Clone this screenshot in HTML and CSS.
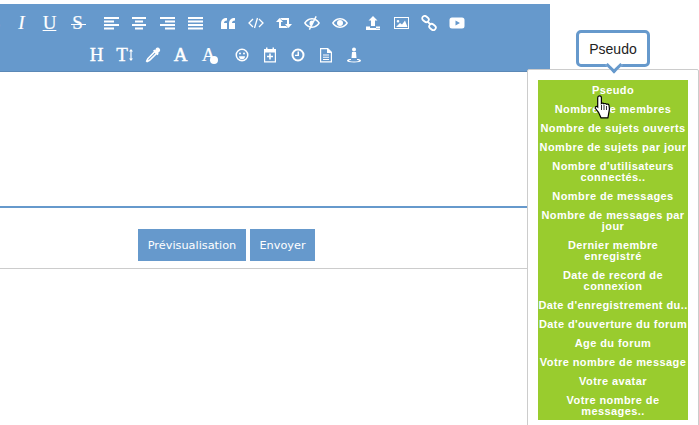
FILE: index.html

```html
<!DOCTYPE html>
<html lang="fr">
<head>
  <meta charset="UTF-8" />
  <title>Editeur</title>
  <link rel="stylesheet" href="styles.css">
</head>
<body>
  <div class="editor">
    <div class="toolbar">
      <div class="tool-row">
        <div class="group">
          <span class="tool txt"><b>B</b></span>
          <span class="tool txt"><i>I</i></span>
          <span class="tool txt"><u>U</u></span>
          <span class="tool txt strike">S</span>
        </div>
        <div class="group">
          <span class="tool"><svg viewBox="0 0 16 16"><path d="M1 2h15v2H1zM1 5.500h10v2H1zM1 9h15v2H1zM1 12.500h10v2H1z"/></svg></span>
          <span class="tool"><svg viewBox="0 0 16 16"><path d="M1 2h14v2H1zM4 5.500h8v2H4zM1 9h14v2H1zM4 12.500h8v2H4z"/></svg></span>
          <span class="tool"><svg viewBox="0 0 16 16"><path d="M1 2h15v2H1zM6 5.500h10v2H6zM1 9h15v2H1zM6 12.500h10v2H6z"/></svg></span>
          <span class="tool"><svg viewBox="0 0 16 16"><path d="M1 2h15v2H1zM1 5.500h15v2H1zM1 9h15v2H1zM1 12.500h15v2H1z"/></svg></span>
        </div>
        <div class="group">
          <span class="tool"><svg viewBox="0 0 16 16"><path d="M1 14V8.500C1 5 3 3 7 3v2.500C5 5.500 4 6.500 4 8h3v6zM9 14V8.500C9 5 11 3 15 3v2.500c-2 0-3 1-3 2.500h3v6z"/></svg></span>
          <span class="tool"><svg viewBox="0 0 16 16" class="line"><path d="M5 4 1 8l4 4M11 4l4 4-4 4M9.500 3l-3 10"/></svg></span>
          <span class="tool"><svg viewBox="0 0 16 16"><path d="M3.500 3 7 7H5v4h5l2 2H3V7H0zM12.500 13 9 9h2V5H6L4 3h9v6h3z"/></svg></span>
          <span class="tool"><svg viewBox="0 0 16 16"><path fill-rule="evenodd" d="M8 3c4 0 7 3 8 5-1 2-4 5-8 5S1 10 0 8c1-2 4-5 8-5zm0 1.500C5 4.500 3 6.500 1.800 8 3 9.500 5 11.500 8 11.500S13 9.500 14.200 8C13 6.500 11 4.500 8 4.500z"/><path d="M8 5.500a2.500 2.500 0 0 1 1.500.5L7 11a2.700 2.700 0 0 1-1.500-3A2.500 2.500 0 0 1 8 5.500z"/><path d="M11.500 1 12.800 1.800 6 15 4.700 14.200z"/></svg></span>
          <span class="tool"><svg viewBox="0 0 16 16"><path fill-rule="evenodd" d="M8 3c4 0 7 3 8 5-1 2-4 5-8 5S1 10 0 8c1-2 4-5 8-5zm0 1.500C5 4.500 3 6.500 1.800 8 3 9.500 5 11.500 8 11.500S13 9.500 14.200 8C13 6.500 11 4.500 8 4.500z"/><circle cx="8" cy="8" r="3"/></svg></span>
        </div>
        <div class="group">
          <span class="tool"><svg viewBox="0 0 16 16"><path fill-rule="evenodd" d="M8 1l4.500 4.500H10V11H6V5.500H3.500zM1 11.500h4V13h6v-1.500h4V15H1zM11.500 13h1v1h-1zM13.500 13h1v1h-1z"/></svg></span>
          <span class="tool"><svg viewBox="0 0 16 16"><path fill-rule="evenodd" d="M1 2h15v12H1zM2 3v10h13V3zM3 12l4-4 2 1.500 3-4 2.500 6.500zM5 5a1.300 1.300 0 1 1 0 2.600A1.300 1.300 0 0 1 5 5z"/></svg></span>
          <span class="tool"><svg viewBox="0 0 16 16" class="line chain"><rect x="1" y="1.500" width="7" height="5" rx="2.500" transform="rotate(40 4.500 4)"/><rect x="8" y="9.500" width="7" height="5" rx="2.500" transform="rotate(40 11.500 12)"/><path d="M6.500 6.500 9.500 9.500"/></svg></span>
          <span class="tool"><svg viewBox="0 0 16 16"><path fill-rule="evenodd" d="M3 2.500h10A2.500 2.500 0 0 1 15.500 5v6a2.500 2.500 0 0 1-2.500 2.500H3A2.500 2.500 0 0 1 .5 11V5A2.500 2.500 0 0 1 3 2.500zM6.500 5.500v5L11 8z"/></svg></span>
        </div>
      </div>
      <div class="tool-row">
        <div class="group">
          <span class="tool txt mid">H</span>
          <span class="tool txt mid">T<svg class="updown" viewBox="0 0 4 12"><path d="M2 0 4 2.500H2.600v7H4L2 12 0 9.500h1.400v-7H0z"/></svg></span>
          <span class="tool"><svg viewBox="0 0 16 16"><path d="M12.500.5a2.600 2.600 0 0 1 2.400 3.700L13 6l.8.8-1.400 1.400-.8-.8L5 14l-3 1.500L.7 14.300 2.200 11.200l6.600-6.600-.8-.8L9.400 2.400l.8.8L11 1.200A2.500 2.500 0 0 1 12.500.5z"/><path class="hole" d="M9.800 5.800 3.600 12l-.6 1.200 1.200-.6 6.200-6.200z"/></svg></span>
          <span class="tool txt heavy">A</span>
          <span class="tool txt">A<em class="dot"></em></span>
        </div>
        <div class="group">
          <span class="tool"><svg viewBox="0 0 16 16"><path fill-rule="evenodd" d="M8 1.500a6.500 6.500 0 1 1 0 13 6.500 6.500 0 0 1 0-13zM8 3a5 5 0 1 0 0 10A5 5 0 0 0 8 3zM5 9.200h6A3 3 0 0 1 5 9.200zM6 5.500a1 1 0 1 1 0 2 1 1 0 0 1 0-2zM10 5.500a1 1 0 1 1 0 2 1 1 0 0 1 0-2z"/></svg></span>
          <span class="tool"><svg viewBox="0 0 16 16"><path fill-rule="evenodd" d="M2 2h2V.5h1.500V2h5V.5H12V2h2v13.500H2zM3.200 5.500v8.800h9.600V5.500zM7.200 6.500h1.600v2.200H11v1.600H8.800v2.200H7.200v-2.200H5V8.700h2.200z"/></svg></span>
          <span class="tool"><svg viewBox="0 0 16 16"><path fill-rule="evenodd" d="M8 1.500a6.500 6.500 0 1 1 0 13 6.500 6.500 0 0 1 0-13zM8 3.500a4.500 4.500 0 1 0 0 9 4.500 4.500 0 0 0 0-9zM7.500 4.500H9V9H5V7.800h2.500z"/></svg></span>
          <span class="tool"><svg viewBox="0 0 16 16"><path fill-rule="evenodd" d="M2 1h8l4 4v10.500H2zM3.200 2.200v12.100h9.600V6H9V2.200zM5 7.500h6v1H5zM5 9.700h6v1H5zM5 11.900h6v1H5z"/></svg></span>
          <span class="tool"><svg viewBox="0 0 16 16"><path d="M8 .5a2 2 0 1 1 0 4 2 2 0 0 1 0-4zM6 5h4l.5 6h-5z"/><path fill-rule="evenodd" d="M5 12v1c-1.500 0-2 .3-2 .7 0 .5 2 .8 5 .8s5-.3 5-.8c0-.4-.5-.7-2-.7v-1c2.500 0 4 .6 4 1.800 0 1.100-2.500 1.700-7 1.700s-7-.6-7-1.700C1 12.600 2.500 12 5 12z"/></svg></span>
        </div>
      </div>
    </div>
    <div class="textarea"></div>
    <div class="actions">
      <button class="btn">Prévisualisation</button>
      <button class="btn">Envoyer</button>
    </div>
  </div>

  <div class="tip">Pseudo</div>
  <div class="popup">
    <ul class="choices">
      <li>Pseudo</li>
      <li>Nombre de membres</li>
      <li class="one">Nombre de sujets ouverts</li>
      <li class="one">Nombre de sujets par jour</li>
      <li>Nombre d'utilisateurs connectés..</li>
      <li>Nombre de messages</li>
      <li>Nombre de messages par jour</li>
      <li>Dernier membre<br>enregistré</li>
      <li>Date de record de connexion</li>
      <li class="one">Date d'enregistrement du..</li>
      <li class="one">Date d'ouverture du forum</li>
      <li>Age du forum</li>
      <li class="one">Votre nombre de message</li>
      <li>Votre avatar</li>
      <li>Votre nombre de messages..</li>
    </ul>
  </div>
  <svg class="hand" viewBox="0 0 18 24"><path d="M5 .8c1.100 0 1.900.8 1.900 1.900v5.800c.7-.6 2-.5 2.500.3.700-.5 2.100-.4 2.500.5.800-.4 2.300-.2 2.600 1 .7 2.500.6 5-.2 7.500l-.9 5H6.500L4 17.300 1 13.500c-.8-1.200.4-2.700 1.800-1.800l.4.400V2.700C3.200 1.600 3.900.8 5 .8z"/><path class="slit" d="M7 10v5M9.500 10v5M12 11v4"/></svg>
</body>
</html>
```

FILE: styles.css

```css
* { margin: 0; padding: 0; box-sizing: border-box; }
html, body { height: 425px; overflow: hidden; }
body { background: #fff; position: relative; font-family: "Liberation Sans", Arial, sans-serif; }

/* editor column runs off the left side of the window */
.editor { width: 650px; margin-left: -100px; padding-top: 4px; }
.toolbar { height: 68px; background: #6699cc; border-bottom: 1px solid #5b88b6; padding-top: 3px; }
.tool-row { display: flex; justify-content: center; gap: 5px; height: 32px; }
.group { display: flex; }
.tool { width: 28px; height: 32px; display: flex; align-items: center; justify-content: center; color: #fff; position: relative; }
.tool svg { width: 16px; height: 16px; fill: #fff; }
.tool svg.line { fill: none; stroke: #fff; stroke-width: 1.300; }
.tool svg.chain { stroke-width: 1.800; }
.tool svg.updown { width: 4px; height: 12px; margin-left: 1px; }
.tool .hole { fill: #6699cc; }
.txt { font-family: "Liberation Serif", serif; font-size: 19px; padding-bottom: 1px; -webkit-text-stroke: .2px #fff; }
.strike::after { content: ""; position: absolute; left: 7px; top: 17px; width: 15px; height: 1px; background: #fff; }
.mid { -webkit-text-stroke: .35px #fff; }
.heavy { -webkit-text-stroke: .5px #fff; }
.dot { position: absolute; left: 15px; top: 17px; width: 8px; height: 8px; border-radius: 50%; background: #fff; }

.textarea { height: 136px; border-bottom: 2px solid #6699cc; }
.actions { height: 61px; padding-top: 21px; border-bottom: 1px solid #ccc; display: flex; justify-content: center; gap: 4px; padding-left: 3px; }
.btn { height: 32px; width: 108px; background: #6699cc; color: #fff; border: none; font-family: "DejaVu Sans", Verdana, sans-serif; font-size: 11.300px; }
.btn + .btn { width: 65px; }

.tip { position: absolute; left: 576px; top: 30px; width: 74px; height: 37px; background: #fff; border: 3px solid #6699cc; border-radius: 5px; font-size: 14px; color: #222; display: flex; align-items: center; justify-content: center; z-index: 3; }
.tip::after { content: ""; position: absolute; left: 29px; top: 26px; width: 9px; height: 9px; background: #fff; border-right: 3px solid #6699cc; border-bottom: 3px solid #6699cc; transform: rotate(45deg); }

.popup { position: absolute; left: 527px; top: 69px; width: 172px; height: 370px; background: #fff; border: 1px solid #ccc; border-radius: 2px; padding: 10px; z-index: 2; }
.choices { list-style: none; width: 150px; background: #99cc2e; }
.choices li { padding: 5px 0 3px; font-size: 11px; line-height: 11px; font-weight: bold; letter-spacing: .42px; color: #fff; text-align: center; }
.choices li.one { display: flex; justify-content: center; white-space: nowrap; }

.hand { position: absolute; left: 594px; top: 95px; width: 19px; height: 24px; z-index: 4; fill: #fff; stroke: #000; stroke-width: 1.200; }
.hand .slit { fill: none; stroke-width: .8; }
```
